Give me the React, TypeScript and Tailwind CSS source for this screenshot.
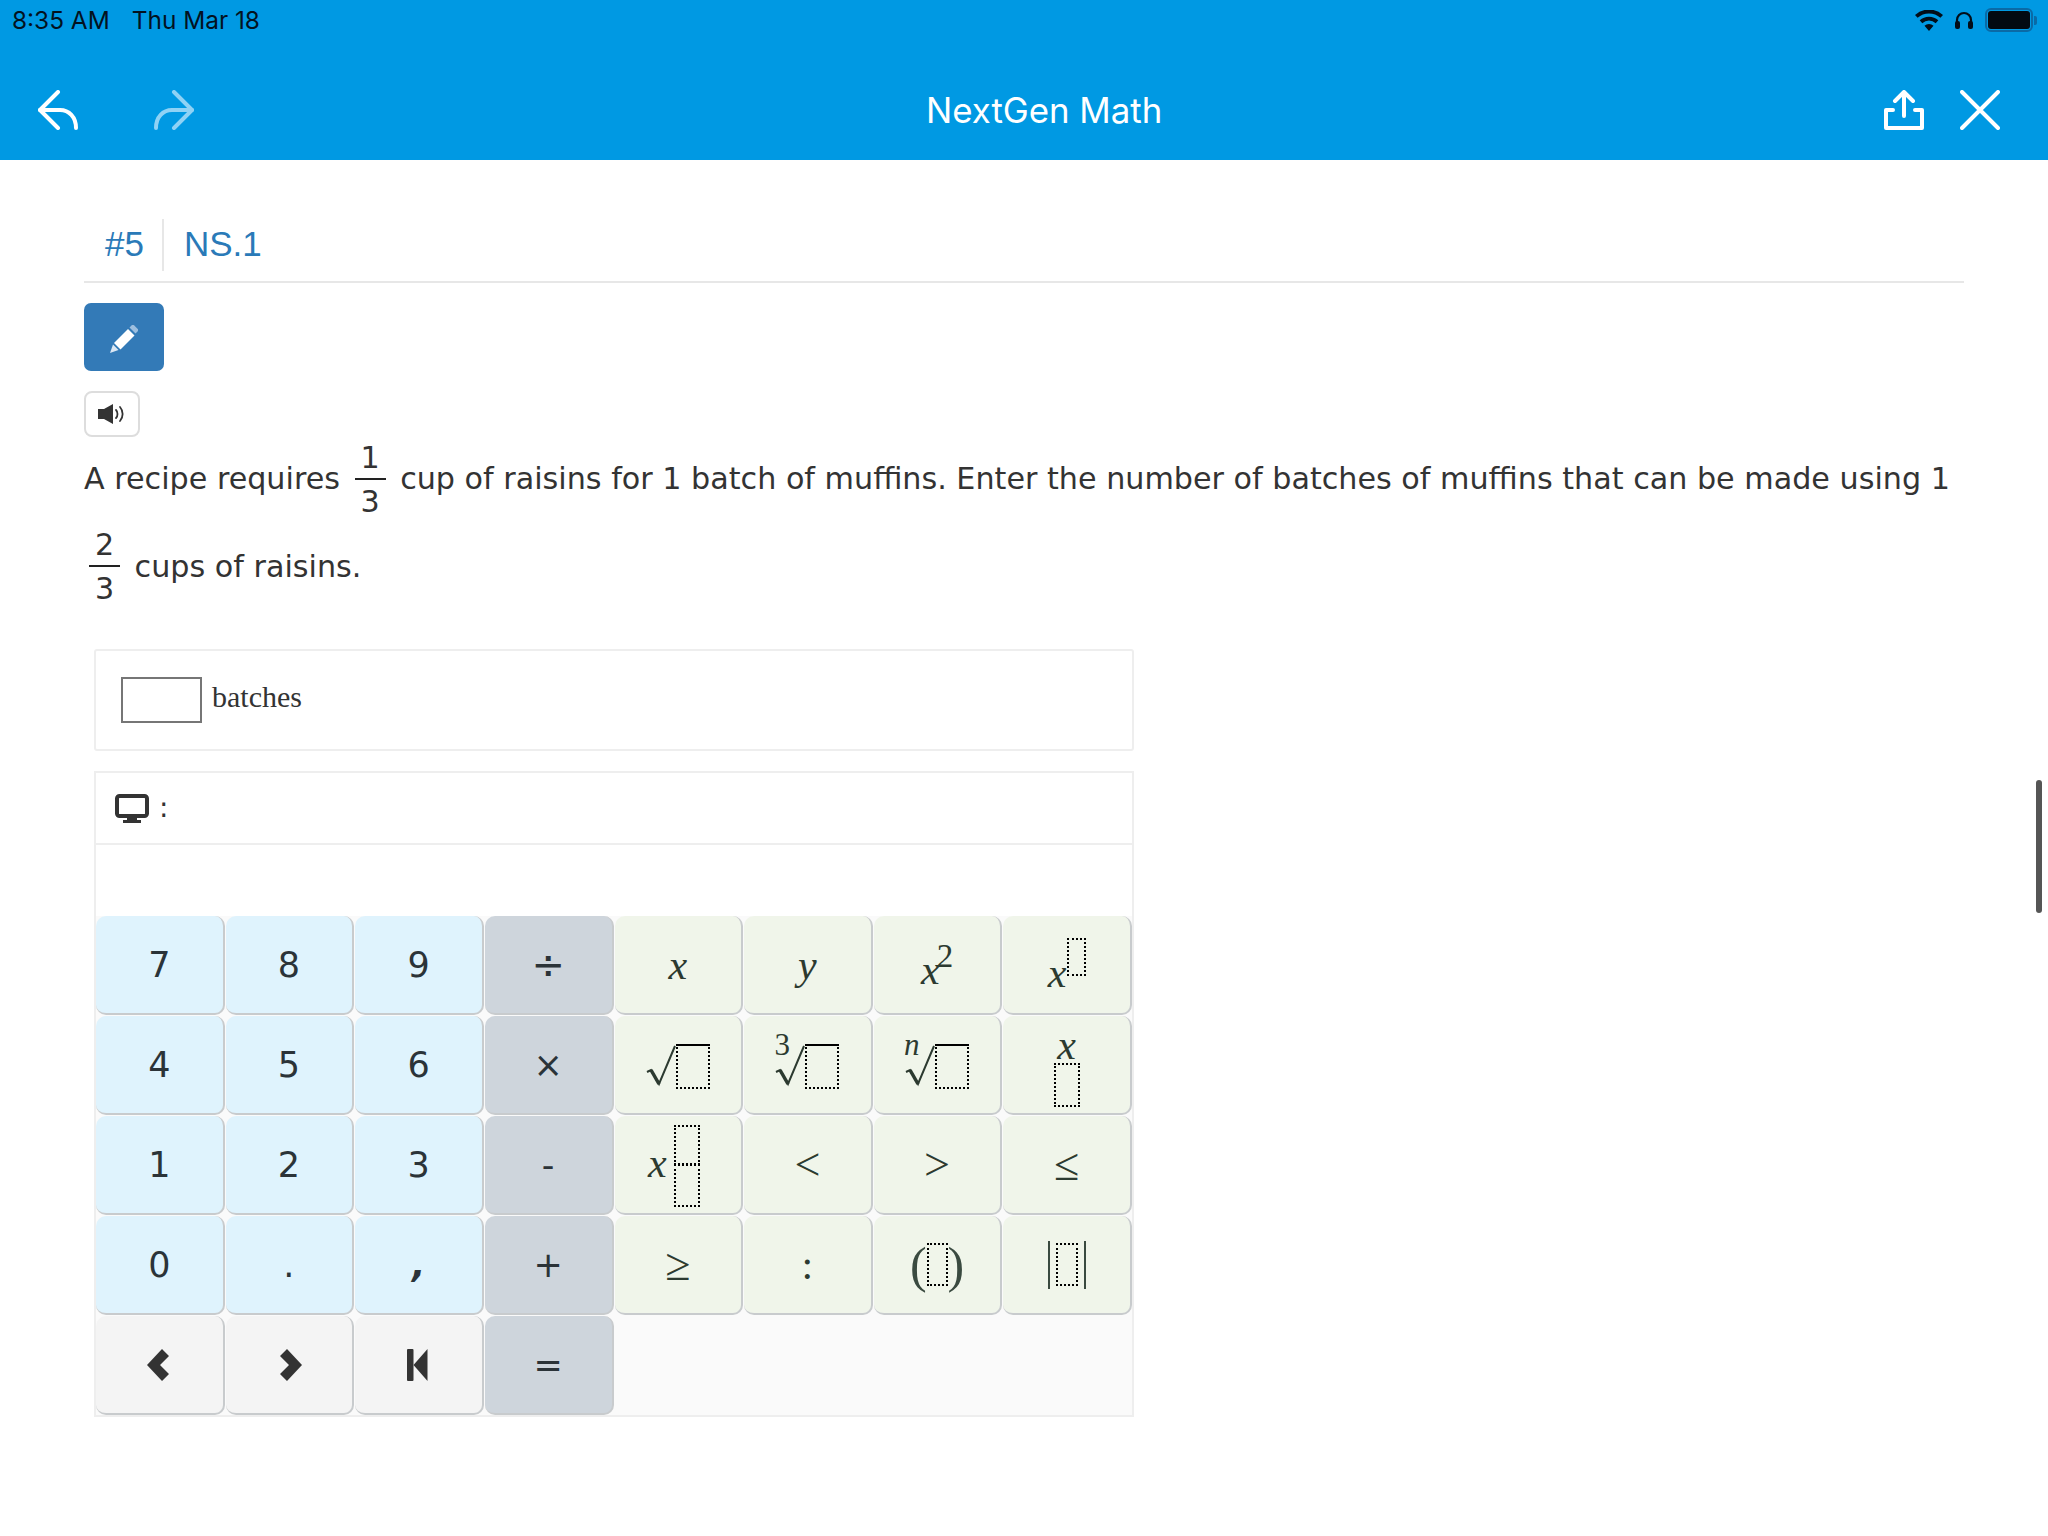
import type { ReactNode } from "react";

const sans = "font-['DejaVu_Sans',sans-serif]";
const serif = "font-['Liberation_Serif',serif]";

function Box({ className }: { className: string }) {
  return <div className={`border-2 border-dotted border-black ${className}`} />;
}

function Radical({ index }: { index?: string }) {
  return (
    <div className="relative mt-[3px] flex items-start">
      {index && (
        <span className={`absolute left-[-1px] top-[-15px] text-[31px] leading-[32px] text-[#2c3a30] ${serif} ${index === "n" ? "italic" : ""}`}>
          {index}
        </span>
      )}
      <svg width="30" height="44" viewBox="0 0 30 44" className="mt-[1px]">
        <path d="M1 27l4-2 8 14L29 1" fill="none" stroke="#2c3a30" strokeWidth="2" />
        <path d="M5 25l8 14" fill="none" stroke="#2c3a30" strokeWidth="3.5" />
      </svg>
      <div className="h-[45px] w-[34px] border-2 border-dotted border-black [border-top-style:solid]" />
    </div>
  );
}

function MathText({ children, className = "" }: { children: ReactNode; className?: string }) {
  return <span className={`text-[42px] leading-none text-[#2c3a30] ${serif} ${className}`}>{children}</span>;
}

type KeyDef = { tone: "blue" | "gray" | "green" | "nav"; label: ReactNode };

const toneClass = {
  blue: "bg-[#dff3fd]",
  gray: "bg-[#ced5dc]",
  green: "bg-[#f0f5ea]",
  nav: "bg-[#f4f4f4]",
};

const digit = (s: string) => <span className={`mt-[2px] text-[35px] leading-none text-[#2b3338] ${sans}`}>{s}</span>;

const keys: KeyDef[] = [
  { tone: "blue", label: digit("7") },
  { tone: "blue", label: digit("8") },
  { tone: "blue", label: digit("9") },
  { tone: "gray", label: <span className={`mt-[-1px] text-[40px] leading-none text-[#2b3338] ${sans}`}>÷</span> },
  { tone: "green", label: <MathText className="italic">x</MathText> },
  { tone: "green", label: <MathText className="italic">y</MathText> },
  {
    tone: "green",
    label: (
      <div className="flex items-start">
        <MathText className="mt-[10px] italic">x</MathText>
        <span className={`ml-[-3px] mt-[1px] text-[33px] leading-none text-[#2c3a30] ${serif}`}>2</span>
      </div>
    ),
  },
  {
    tone: "green",
    label: (
      <div className="flex items-start">
        <MathText className="mt-[17px] italic">x</MathText>
        <Box className="mt-[3px] h-[38px] w-[19px]" />
      </div>
    ),
  },
  { tone: "blue", label: digit("4") },
  { tone: "blue", label: digit("5") },
  { tone: "blue", label: digit("6") },
  { tone: "gray", label: digit("×") },
  { tone: "green", label: <Radical /> },
  { tone: "green", label: <Radical index="3" /> },
  { tone: "green", label: <Radical index="n" /> },
  {
    tone: "green",
    label: (
      <div className="flex flex-col items-center pt-[1px]">
        <MathText className="italic leading-[38px]">x</MathText>
        <Box className="mt-[-3px] h-[44px] w-[26px]" />
      </div>
    ),
  },
  { tone: "blue", label: digit("1") },
  { tone: "blue", label: digit("2") },
  { tone: "blue", label: digit("3") },
  { tone: "gray", label: digit("-") },
  {
    tone: "green",
    label: (
      <div className="mr-[8px] mt-[3px] flex items-center gap-[7px]">
        <MathText className="mt-[-6px] italic">x</MathText>
        <div className="flex flex-col">
          <Box className="h-[40px] w-[26px]" />
          <Box className="mt-[-1px] h-[43px] w-[26px]" />
        </div>
      </div>
    ),
  },
  { tone: "green", label: <MathText className="text-[46px]">&lt;</MathText> },
  { tone: "green", label: <MathText className="text-[46px]">&gt;</MathText> },
  { tone: "green", label: <MathText className="text-[46px]">≤</MathText> },
  { tone: "blue", label: digit("0") },
  { tone: "blue", label: digit(".") },
  { tone: "blue", label: <span className={`mt-[2px] text-[35px] font-bold italic leading-none text-[#2b3338] ${sans}`}>,</span> },
  { tone: "gray", label: digit("+") },
  { tone: "green", label: <MathText className="text-[46px]">≥</MathText> },
  { tone: "green", label: <MathText className="text-[36px]">:</MathText> },
  {
    tone: "green",
    label: (
      <div className="flex items-center">
        <span className={`text-[50px] leading-none text-[#3a4a40] ${serif}`}>(</span>
        <Box className="h-[43px] w-[21px]" />
        <span className={`text-[50px] leading-none text-[#3a4a40] ${serif}`}>)</span>
      </div>
    ),
  },
  {
    tone: "green",
    label: (
      <div className="flex items-center gap-[6px]">
        <div className="h-[48px] w-[2px] bg-[#3a4a40]" />
        <Box className="h-[43px] w-[22px]" />
        <div className="h-[48px] w-[2px] bg-[#3a4a40]" />
      </div>
    ),
  },
  {
    tone: "nav",
    label: (
      <svg width="22" height="32" viewBox="0 0 22 32" className="mr-[2px]">
        <path d="M15 0l7 7-9 9 9 9-7 7L0 16z" fill="#333" />
      </svg>
    ),
  },
  {
    tone: "nav",
    label: (
      <svg width="22" height="32" viewBox="0 0 22 32" className="ml-[4px]">
        <path d="M7 0L0 7l9 9-9 9 7 7 15-16z" fill="#333" />
      </svg>
    ),
  },
  {
    tone: "nav",
    label: (
      <svg width="21" height="32" viewBox="0 0 21 32" className="mr-[2px]">
        <rect x="0" y="0" width="6.5" height="32" rx="1" fill="#333" />
        <path d="M20.5 0v32L6.5 16z" fill="#333" />
      </svg>
    ),
  },
  { tone: "gray", label: digit("=") },
];

function Fraction({ top, bottom }: { top: string; bottom: string }) {
  return (
    <span className="mx-[5px] inline-flex w-[31px] flex-col items-center align-middle">
      <span className="leading-[40px]">{top}</span>
      <span className="h-[2px] w-full bg-[#222]" />
      <span className="leading-[44px]">{bottom}</span>
    </span>
  );
}

export default function App() {
  return (
    <div className="relative h-[1536px] overflow-hidden bg-white">
      <header className="h-[160px] bg-[#0099e3]">
        <div className="flex h-[40px] items-center justify-between pl-[12px] pr-[11px]">
          <div className="flex gap-[22px] font-['Inter',sans-serif] text-[24.4px] text-[#03121f]">
            <span>8:35 AM</span>
            <span>Thu Mar 18</span>
          </div>
          <div className="flex items-center">
            <svg width="28" height="21" viewBox="0 0 28 21" className="mr-[11px]">
              <path d="M14 21l-4.5-5.2a6.5 6.5 0 0 1 9 0zM7.3 13.2L4.7 10.3a14 14 0 0 1 18.6 0l-2.6 2.9a10 10 0 0 0-13.4 0zM2.6 7.8L0 4.9a21 21 0 0 1 28 0l-2.6 2.9a17 17 0 0 0-22.8 0z" fill="#020d18" />
            </svg>
            <svg width="20" height="18" viewBox="0 0 20 18" className="mr-[11px]">
              <path d="M3 11V9a7 7 0 0 1 14 0v2" fill="none" stroke="#020d18" strokeWidth="2.2" />
              <rect x="1" y="10" width="5" height="8" rx="2" fill="#020d18" />
              <rect x="14" y="10" width="5" height="8" rx="2" fill="#020d18" />
            </svg>
            <div className="flex h-[24px] w-[48px] items-center rounded-[6px] border-2 border-[#0a6aa6] p-[1px]">
              <div className="h-full w-full rounded-[3px] bg-[#020a12]" />
            </div>
            <div className="ml-[1px] h-[9px] w-[3px] rounded-r-[2px] bg-[#0a6aa6]" />
          </div>
        </div>
        <div className="relative flex h-[120px] items-center justify-between pl-[38px] pr-[48px] pt-[20px]">
          <div className="flex items-center gap-[76px]">
            <svg width="40" height="40" viewBox="0 0 40 40" fill="none" stroke="#fff" strokeWidth="4" strokeLinecap="round" strokeLinejoin="round">
              <path d="M20 2L2 20l18 18" />
              <path d="M2 20h20c9 0 16 7 16 18" />
            </svg>
            <svg width="40" height="40" viewBox="0 0 40 40" fill="none" stroke="#8fd2f5" strokeWidth="4" strokeLinecap="round" strokeLinejoin="round">
              <path d="M20 2l18 18-18 18" />
              <path d="M38 20H18C9 20 2 27 2 38" />
            </svg>
          </div>
          <h1 className="absolute left-[926px] font-['Inter',sans-serif] text-[34.8px] font-normal text-white">NextGen Math</h1>
          <div className="flex items-center gap-[36px]">
            <svg width="40" height="40" viewBox="0 0 40 40" fill="none" stroke="#fff" strokeWidth="4" strokeLinecap="round" strokeLinejoin="round">
              <path d="M20 26V3M11 11l9-9 9 9" />
              <path d="M9 20H2v18h36V20h-7" />
            </svg>
            <svg width="40" height="40" viewBox="0 0 40 40" fill="none" stroke="#fff" strokeWidth="4" strokeLinecap="round">
              <path d="M2 2l36 36M38 2L2 38" />
            </svg>
          </div>
        </div>
      </header>

      <main className="px-[84px]">
        <div className="mt-[59px] flex h-[64px] items-center border-b-2 border-[#e7e7e7] pb-[11px] font-['Liberation_Sans',sans-serif] text-[35px] text-[#2a7ab8]">
          <span className="pl-[21px] pr-[18px]">#5</span>
          <span className="h-[52px] w-[2px] bg-[#e7e7e7]" />
          <span className="pl-[20px]">NS.1</span>
        </div>

        <button className="mt-[20px] flex h-[68px] w-[80px] items-center justify-center rounded-[7px] bg-[#337ab7]">
          <svg width="28" height="28" viewBox="0 0 28 28" className="mt-[4px]">
            <path d="M4 18L18 4l6.500 6.500L10.500 24.500z" fill="#fff" />
            <path d="M19.500 2.500l2-2a2 2 0 0 1 2.800 0l3.200 3.200a2 2 0 0 1 0 2.800l-2 2z" fill="#9dbfe0" />
            <path d="M3 19.500l5.500 5.500L0 28z" fill="#dbe7f3" />
          </svg>
        </button>

        <button className="mt-[20px] flex h-[46px] w-[56px] items-center justify-center rounded-[8px] border-2 border-[#dddddd] bg-white">
          <svg width="28" height="20" viewBox="0 0 28 20">
            <path d="M0 5h6l9-5v20l-9-5H0z" fill="#333" />
            <path d="M18 6c2 2 2 6 0 8M22 3c3.500 4 3.500 10 0 14" fill="none" stroke="#333" strokeWidth="1.800" strokeLinecap="round" />
          </svg>
        </button>

        <p className={`mt-[-1px] text-[30.2px] leading-[86px] text-[#333] ${sans}`}>
          A recipe requires <Fraction top="1" bottom="3" /> cup of raisins for 1 batch of muffins. Enter the number of batches of muffins that can be made using 1 <Fraction top="2" bottom="3" /> cups of raisins.
        </p>

        <div className="ml-[10px] mt-[38px] w-[1040px]">
          <div className="flex h-[102px] items-start rounded-[3px] border-2 border-[#eeeeee] pl-[25px] pt-[26px]">
            <div className="h-[46px] w-[81px] border-2 border-[#767676]" />
            <span className={`ml-[10px] text-[30px] leading-[40px] text-[#333] ${serif}`}>batches</span>
          </div>

          <div className="mt-[20px] border-2 border-b-0 border-[#eeeeee]">
            <div className="flex h-[72px] items-center gap-[10px] border-b-2 border-[#eeeeee] pl-[19px]">
              <svg width="34" height="30" viewBox="0 0 34 30" className="mt-[2px]">
                <rect x="2" y="2" width="30" height="20" rx="2.500" fill="none" stroke="#333" strokeWidth="4" />
                <path d="M12 24h10v2h4v3H8v-3h4z" fill="#333" />
              </svg>
              <span className={`text-[28px] text-[#333] ${sans}`}>:</span>
            </div>
            <div className="mt-[71px] grid grid-cols-8 gap-[1px] bg-[#fafafa]">
              {keys.map((key, index) => (
                <div
                  key={index}
                  className={`flex h-[99px] items-center justify-center rounded-[10px] border-b-2 border-r-2 border-[#c8cbcd] ${toneClass[key.tone]}`}
                >
                  {key.label}
                </div>
              ))}
            </div>
            <div className="h-[2px] bg-[#eeeeee]" />
          </div>
        </div>
      </main>

      <div className="absolute left-[2036px] top-[780px] h-[133px] w-[6px] rounded-full bg-[#555]" />
    </div>
  );
}
